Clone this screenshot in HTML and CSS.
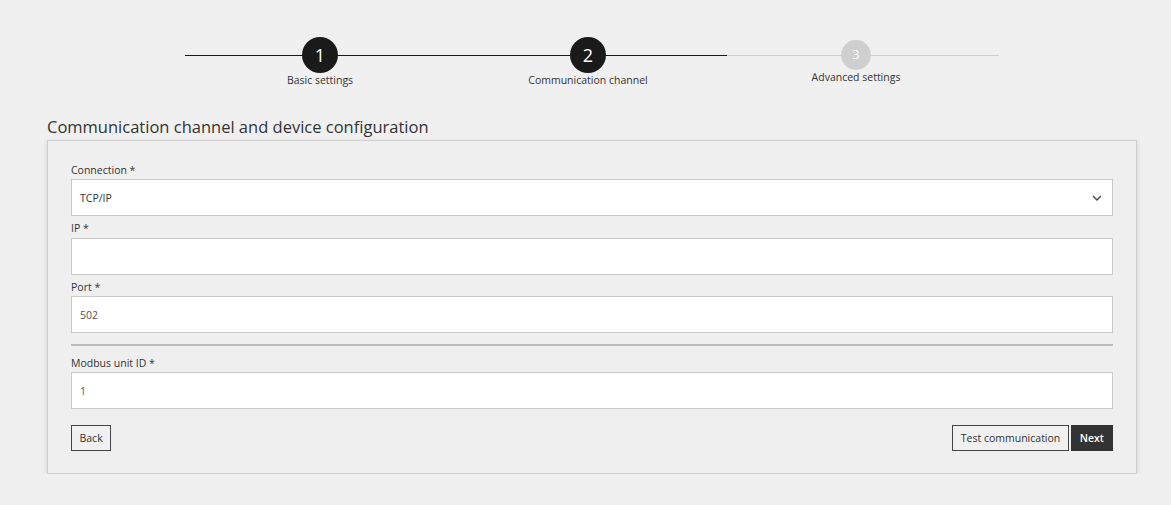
FILE: index.html
```html
<!DOCTYPE html>
<html lang="en">
<head>
<meta charset="utf-8">
<title>Communication channel</title>
<link rel="stylesheet" href="styles.css">
</head>
<body>
<div class="page">
  <div class="stepper">
    <div class="step done">
      <div class="circle">1</div>
      <div class="step-label">Basic settings</div>
    </div>
    <div class="step done">
      <div class="circle">2</div>
      <div class="step-label">Communication channel</div>
    </div>
    <div class="step todo">
      <div class="circle">3</div>
      <div class="step-label">Advanced settings</div>
    </div>
  </div>

  <h2 class="title">Communication channel and device configuration</h2>

  <div class="card">
    <div class="group">
      <label class="label">Connection *</label>
      <div class="select">
        <span class="value">TCP/IP</span>
        <svg class="chevron" width="10" height="6" viewBox="0 0 10 6"><path d="M1 1 L5 5 L9 1" fill="none" stroke="#444" stroke-width="1.3"/></svg>
      </div>
    </div>
    <div class="group">
      <label class="label">IP *</label>
      <div class="input"></div>
    </div>
    <div class="group">
      <label class="label">Port *</label>
      <div class="input">502</div>
    </div>
    <hr class="divider">
    <div class="group">
      <label class="label">Modbus unit ID *</label>
      <div class="input">1</div>
    </div>
    <div class="actions">
      <button class="btn">Back</button>
      <div class="right">
        <button class="btn">Test communication</button>
        <button class="btn primary">Next</button>
      </div>
    </div>
  </div>
</div>
</body>
</html>
```

FILE: styles.css
```css
html, body {
  margin: 0;
  padding: 0;
  background: #f0f0f0;
  font-family: "Open Sans", "Liberation Sans", sans-serif;
  color: #333;
}

.page {
  padding: 37px 35px 0 47px;
}

.stepper {
  width: 813px;
  margin-left: 138px;
  display: flex;
  padding-left: 1px;
  background:
    linear-gradient(to right, #1a1a1a 0, #1a1a1a 542px, #cfcfcf 542px, #cfcfcf 100%)
    no-repeat 0 17.5px / 100% 1px;
}

.step {
  width: 268px;
  display: flex;
  flex-direction: column;
  align-items: center;
}

.circle {
  width: 36px;
  height: 36px;
  border-radius: 50%;
  background: #1a1a1a;
  color: #fff;
  font-size: 18px;
  font-weight: 400;
  display: flex;
  align-items: center;
  justify-content: center;
  line-height: 1;
}

.step.todo .circle {
  width: 30px;
  height: 30px;
  margin-top: 3px;
  background: #cfcfcf;
  font-size: 12px;
}

.step-label {
  font-size: 10.5px;
  line-height: 15px;
  color: #333;
}

.title {
  margin: 28px 0 2px;
  font-size: 16.5px;
  font-weight: 400;
  line-height: 22px;
  color: #333;
}

.card {
  width: 1042px;
  background: #efefef;
  border: 1px solid #cfcfcf;
  box-shadow: 0 2px 6px rgba(0, 0, 0, 0.14);
  padding: 20.5px 23px 22px 23px;
}

.group {
  margin-bottom: 4px;
}

.label {
  display: block;
  font-size: 10.5px;
  line-height: 16.5px;
  margin-bottom: 1px;
  color: #333;
}

.input, .select {
  box-sizing: border-box;
  height: 37px;
  background: #fff;
  border: 1px solid #cacaca;
  padding: 0 8px;
  font-size: 10.5px;
  color: #555;
  display: flex;
  align-items: center;
}

.select {
  justify-content: space-between;
  color: #333;
}

.chevron {
  margin-right: 2px;
}

.divider {
  border: 0;
  height: 2px;
  background: #bcbcbc;
  margin: 11px 0 8.5px;
}

.actions {
  display: flex;
  justify-content: space-between;
  margin-top: 16px;
}

.right {
  display: flex;
  gap: 2px;
}

.btn {
  font-family: "Open Sans", "Liberation Sans", sans-serif;
  font-size: 10.5px;
  height: 26px;
  padding: 0 7.5px;
  background: #f0f0f0;
  border: 1px solid #444;
  border-radius: 0;
  color: #333;
  cursor: pointer;
}

.btn.primary {
  background: #333;
  border-color: #333;
  color: #fff;
  font-weight: 600;
  padding: 0 8px;
}
```
